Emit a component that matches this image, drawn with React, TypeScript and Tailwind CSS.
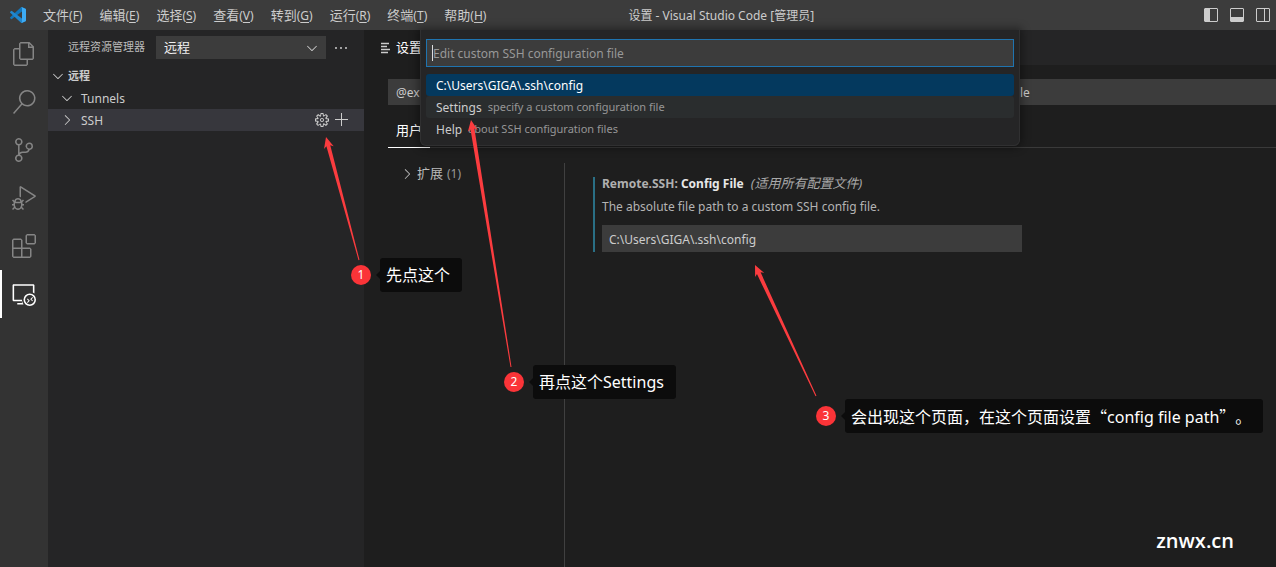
import { useState } from "react";
import {
  VscAdd,
  VscChevronDown,
  VscChevronRight,
  VscDebugAlt,
  VscEllipsis,
  VscExtensions,
  VscFiles,
  VscGear,
  VscLayoutPanel,
  VscLayoutSidebarLeft,
  VscLayoutSidebarRightOff,
  VscRemoteExplorer,
  VscSearch,
  VscSourceControl,
} from "react-icons/vsc";

const menus = [
  { label: "文件", key: "F" },
  { label: "编辑", key: "E" },
  { label: "选择", key: "S" },
  { label: "查看", key: "V" },
  { label: "转到", key: "G" },
  { label: "运行", key: "R" },
  { label: "终端", key: "T" },
  { label: "帮助", key: "H" },
];

const activities = [
  { id: "files", label: "资源管理器", Icon: VscFiles },
  { id: "search", label: "搜索", Icon: VscSearch },
  { id: "scm", label: "源代码管理", Icon: VscSourceControl },
  { id: "debug", label: "运行和调试", Icon: VscDebugAlt },
  { id: "extensions", label: "扩展", Icon: VscExtensions },
  { id: "remote", label: "远程资源管理器", Icon: VscRemoteExplorer },
];

const picks = [
  { label: "C:\\Users\\GIGA\\.ssh\\config", detail: "", row: "bg-[#04395e] text-white" },
  { label: "Settings", detail: "specify a custom configuration file", row: "bg-[#2a2d2e]" },
  { label: "Help", detail: "about SSH configuration files", row: "" },
];

// tip and tail of every annotation arrow
const arrows = [
  { tip: [326, 137], tail: [359, 260] },
  { tip: [471, 120], tail: [511, 367] },
  { tip: [755, 265], tail: [816, 396] },
];

export default function App() {
  return (
    <div className="relative flex h-screen flex-col overflow-hidden bg-[#1e1e1e] font-['Noto_Sans','Noto_Sans_CJK_SC',sans-serif] text-xs text-[#cccccc]">
      <TitleBar />
      <div className="flex min-h-0 flex-1">
        <ActivityBar />
        <SideBar />
        <SettingsEditor />
      </div>
      <QuickPick />
      <Annotations />
      <div className="absolute right-[42px] bottom-3 font-['Open_Sans',sans-serif] text-xl font-semibold text-white">znwx.cn</div>
    </div>
  );
}

function TitleBar() {
  return (
    <header className="flex h-[30px] shrink-0 items-center bg-[#3c3c3c]">
      <VscodeLogo />
      <nav className="flex gap-px">
        {menus.map((m) => (
          <button key={m.key} className="flex h-[30px] items-center px-2 pt-px whitespace-nowrap">
            <span className="text-[13px]">{m.label}</span>(<u className="underline-offset-2">{m.key}</u>)
          </button>
        ))}
      </nav>
      <h1 className="ml-[134px] pt-px whitespace-nowrap">设置 - Visual Studio Code [管理员]</h1>
      <div className="ml-auto flex gap-[10px] pr-[5px]">
        <button aria-label="切换主侧栏"><VscLayoutSidebarLeft size={16} /></button>
        <button aria-label="切换面板"><VscLayoutPanel size={16} /></button>
        <button aria-label="切换辅助侧栏"><VscLayoutSidebarRightOff size={16} /></button>
      </div>
    </header>
  );
}

function VscodeLogo() {
  return (
    <svg className="mr-[9px] ml-[10px] size-4 shrink-0" viewBox="0 0 100 100">
      <path fill="#1176bb" d="M96.5 10.8 75.9.9a6.2 6.2 0 0 0-7.1 1.2L1.4 63.6a4.2 4.2 0 0 0 0 6.1l5.5 5a4.2 4.2 0 0 0 5.3.3L93.4 13.4A4.1 4.1 0 0 1 100 16.7v-.3a6.3 6.3 0 0 0-3.5-5.6Z" />
      <path fill="#2087cf" d="m96.5 89.2-20.6 9.9a6.2 6.2 0 0 1-7.1-1.2L1.4 36.4a4.2 4.2 0 0 1 0-6.1l5.5-5a4.2 4.2 0 0 1 5.3-.3l81.2 61.6a4.1 4.1 0 0 0 6.6-3.3v.3a6.3 6.3 0 0 1-3.5 5.6Z" />
      <path fill="#3dabf4" d="M75.9 99.1a6.2 6.2 0 0 1-7.1-1.2c2.3 2.3 6.2.7 6.2-2.6V4.7c0-3.3-3.9-4.9-6.2-2.6A6.2 6.2 0 0 1 75.9.9l20.6 9.9a6.3 6.3 0 0 1 3.5 5.6v67.2a6.3 6.3 0 0 1-3.5 5.6Z" />
    </svg>
  );
}

function ActivityBar() {
  const [active, setActive] = useState("remote");

  return (
    <nav className="flex w-12 shrink-0 flex-col bg-[#333333]">
      {activities.map(({ id, label, Icon }) => (
        <button
          key={id}
          aria-label={label}
          onClick={() => setActive(id)}
          className={
            "flex h-12 items-center justify-center border-x-2 border-r-transparent " +
            (active === id ? "border-l-white text-white" : "border-l-transparent text-[#858585]")
          }
        >
          <Icon size={24} />
        </button>
      ))}
    </nav>
  );
}

function SideBar() {
  return (
    <aside className="w-[316px] shrink-0 bg-[#252526]">
      <div className="flex h-[35px] items-center pl-5">
        <label htmlFor="remote-kind" className="w-[88px] whitespace-nowrap text-[11px] text-[#bbbbbb]">远程资源管理器</label>
        <div className="relative">
          <select id="remote-kind" className="block h-[23px] w-[170px] appearance-none bg-[#3c3c3c] pl-2 text-[13px] text-[#f0f0f0] outline-none">
            <option>远程</option>
          </select>
          <VscChevronDown size={16} className="pointer-events-none absolute top-1 right-[6px]" />
        </div>
        <button aria-label="更多" className="ml-[7px]"><VscEllipsis size={16} /></button>
      </div>
      <button className="flex h-[22px] w-full items-center gap-[2px] pl-[2px] text-[11px] font-bold">
        <VscChevronDown size={16} />远程
      </button>
      <button className="flex h-[22px] w-full items-center gap-[6px] pl-[11px]">
        <VscChevronDown size={16} /><span className="pt-px">Tunnels</span>
      </button>
      <div className="flex h-[22px] items-center bg-[#37373d] pr-[14px] pl-[11px]">
        <button className="flex flex-1 items-center gap-[6px]">
          <VscChevronRight size={16} /><span className="pt-px">SSH</span>
        </button>
        <button aria-label="配置" className="mr-1"><VscGear size={16} /></button>
        <button aria-label="新建"><VscAdd size={16} /></button>
      </div>
    </aside>
  );
}

function SettingsEditor() {
  return (
    <main className="flex min-w-0 flex-1 flex-col">
      <div className="flex h-[35px] shrink-0 bg-[#252526]">
        <button className="flex w-[120px] items-center gap-1 bg-[#1e1e1e] pl-4 text-[13px] text-white">
          <SettingsTabIcon />设置
        </button>
      </div>
      <div className="pt-[14px] pl-6">
        <input
          aria-label="搜索设置"
          className="h-[26px] w-full bg-[#3c3c3c] px-2 outline-none"
          defaultValue="@ext:ms-vscode-remote.remote-ssh,ms-vscode-remote.remote-ssh-edit,ms-vscode.remote-explorer in config file"
        />
        <div className="mt-[9px] h-[34px] border-b border-[#3a3a3a]">
          <button className="h-[34px] w-[42px] border-b border-white text-[13px] text-white">用户</button>
        </div>
      </div>
      <div className="flex min-h-0 flex-1 pt-[15px] pl-6">
        <div className="w-[176px] shrink-0">
          <button className="flex h-[22px] items-center gap-[2px] pl-[11px] text-[#bbbbbb]">
            <VscChevronRight size={16} />
            <span className="text-[13px]">扩展</span>
            <span className="ml-[2px] text-[#999999]">(1)</span>
          </button>
        </div>
        <section className="min-w-0 flex-1 border-l border-[#404040] pt-[14px] pl-7">
          <div className="h-[75px] border-l-2 border-[#2a6f85] pl-[7px]">
            <div className="flex h-[14px] items-center whitespace-nowrap">
              <label htmlFor="config-file" className="font-bold text-[#b0b0b0]">
                Remote.SSH: <span className="text-[#e7e7e7]">Config File</span>
              </label>
              <em className="ml-[7px] text-[13px] text-[#a9a9a9]">(适用所有配置文件)</em>
            </div>
            <p className="mt-[7px] text-xs leading-[18px] text-[#b4b4b4]">The absolute file path to a custom SSH config file.</p>
            <input
              id="config-file"
              className="mt-[9px] h-[27px] w-[420px] bg-[#3c3c3c] px-[7px] pt-px outline-none"
              defaultValue={"C:\\Users\\GIGA\\.ssh\\config"}
            />
          </div>
        </section>
      </div>
    </main>
  );
}

function SettingsTabIcon() {
  return (
    <svg width="12" height="12" viewBox="0 0 12 12" stroke="#cccccc" strokeWidth="1.4" fill="none">
      <path d="M1 1.5h8M1 4.5h6M1 7.5h9M1 10.5h7" />
    </svg>
  );
}

function QuickPick() {
  return (
    <div className="absolute top-[30px] left-[420px] w-[600px] rounded-b-md border border-t-0 border-[#303031] bg-[#252526] px-[5px] pt-[9px] pb-[5px] shadow-[0_0_8px_2px_rgba(0,0,0,0.4)]">
      <div className="relative">
        <input
          aria-label="SSH"
          placeholder="Edit custom SSH configuration file"
          className="block h-7 w-full border border-[#1f74b0] bg-[#3c3c3c] px-[6px] outline-none placeholder:text-[#989898]"
        />
        <span className="absolute top-[6px] left-[6px] h-4 w-px bg-[#dddddd]" />
      </div>
      <ul className="mt-[7px]">
        {picks.map((p) => (
          <li key={p.label}>
            <button className={"flex h-[22px] w-full items-center gap-[6px] rounded-[3px] pt-px pl-[10px] " + p.row}>
              <span>{p.label}</span>
              <span className="text-[11px] text-[#969696]">{p.detail}</span>
            </button>
          </li>
        ))}
      </ul>
    </div>
  );
}

function arrowPoints(tip: number[], tail: number[]) {
  const dx = tail[0] - tip[0];
  const dy = tail[1] - tip[1];
  const len = Math.hypot(dx, dy);
  // along = distance from the tip, side = distance from the shaft
  const at = (along: number, side: number) =>
    [tip[0] + (dx * along - dy * side) / len, tip[1] + (dy * along + dx * side) / len].join(",");
  return [at(0, 0), at(11, 5), at(9, 2), at(len, 0.5), at(len, -0.5), at(9, -2), at(11, -5)].join(" ");
}

function Annotations() {
  return (
    <>
      <svg className="pointer-events-none absolute inset-0 size-full" fill="#fb3c3f">
        {arrows.map((a) => (
          <polygon key={a.tip[0]} points={arrowPoints(a.tip, a.tail)} />
        ))}
      </svg>
      <div className="absolute top-[258px] left-[351px]">
        <Callout n={1}>先点这个</Callout>
      </div>
      <div className="absolute top-[365px] left-[504px]">
        <Callout n={2}>再点这个Settings</Callout>
      </div>
      <div className="absolute top-[399px] left-[816px]">
        <Callout n={3}>
          会出现这个页面，在这个页面设置<span className="font-['Noto_Sans_CJK_SC',sans-serif]">“</span>
          config file path
          <span className="font-['Noto_Sans_CJK_SC',sans-serif]">”</span>。
        </Callout>
      </div>
    </>
  );
}

function Callout({ n, children }: { n: number; children: React.ReactNode }) {
  return (
    <div className="flex items-center">
      <span className="flex size-5 items-center justify-center rounded-full bg-[#fb3438] text-xs text-white">{n}</span>
      <span className="ml-[5px] border-y-4 border-r-4 border-y-transparent border-r-[#0c0c0c]" />
      <span className="h-[34px] rounded-[3px] bg-[#0c0c0c] pr-3 pl-[6px] text-base leading-[34px] whitespace-nowrap text-white [text-spacing-trim:space-all]">
        {children}
      </span>
    </div>
  );
}
